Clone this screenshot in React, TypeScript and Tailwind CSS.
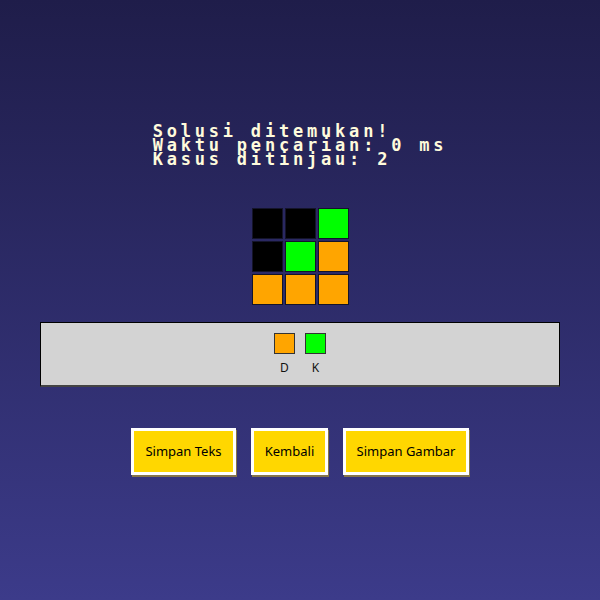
const grid = [
  ["#000000", "#000000", "#00ff00"],
  ["#000000", "#00ff00", "#ffa500"],
  ["#ffa500", "#ffa500", "#ffa500"],
];

const legend = [
  { label: "D", color: "#ffa500" },
  { label: "K", color: "#00ff00" },
];

const App = () => {
  return (
    <div className="w-[600px] h-[600px] flex flex-col items-center bg-gradient-to-b from-[#1f1d4a] to-[#3c3b8a]">
      {/* status text */}
      <div className="mt-[124px] text-[#fffbdc] font-['DejaVu_Sans_Mono',monospace] font-bold text-[17px] leading-[14px] tracking-[3.8px] whitespace-pre">
        <div>Solusi ditemukan!</div>
        <div>Waktu pencarian: 0 ms</div>
        <div>Kasus ditinjau: 2</div>
      </div>

      {/* puzzle board */}
      <div className="mt-[42px] grid grid-cols-3 gap-[2px]">
        {grid.flat().map((c, i) => (
          <div
            key={i}
            className="w-[31px] h-[31px] border border-[#14142a]"
            style={{ backgroundColor: c }}
          />
        ))}
      </div>

      {/* legend panel */}
      <div className="mt-[17px] w-[520px] h-[65px] bg-[#d3d3d3] border border-black border-b-2 border-b-[#444] flex justify-center gap-[10px] pt-[10px]">
        {legend.map((l) => (
          <div key={l.label} className="flex flex-col items-center">
            <div className="w-[21px] h-[21px] border border-[#333]" style={{ backgroundColor: l.color }} />
            <span className="mt-[7px] text-[12px] leading-[14px] text-[#111] font-['Noto_Sans',sans-serif]">
              {l.label}
            </span>
          </div>
        ))}
      </div>

      {/* actions */}
      <div className="mt-[41px] flex gap-[15px] font-['Noto_Sans',sans-serif] text-[13px] text-black">
        <button className="w-[105px] h-[47px] bg-[#ffd700] border-[3px] border-white shadow-[1px_2px_0_rgba(255,215,0,0.4)]">
          Simpan Teks
        </button>
        <button className="w-[77px] h-[47px] bg-[#ffd700] border-[3px] border-white shadow-[1px_2px_0_rgba(255,215,0,0.4)]">
          Kembali
        </button>
        <button className="w-[126px] h-[47px] bg-[#ffd700] border-[3px] border-white shadow-[1px_2px_0_rgba(255,215,0,0.4)]">
          Simpan Gambar
        </button>
      </div>
    </div>
  );
};

export default App;
